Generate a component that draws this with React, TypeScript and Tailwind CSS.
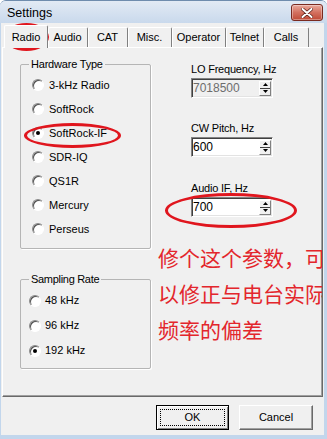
import React from 'react';

const tabs = [
  { label: 'Radio', w: 'w-[44px]' },
  { label: 'Audio', w: 'w-[40px]' },
  { label: 'CAT', w: 'w-[40px]' },
  { label: 'Misc.', w: 'w-[44px]' },
  { label: 'Operator', w: 'w-[54px]' },
  { label: 'Telnet', w: 'w-[38px]' },
  { label: 'Calls', w: 'w-[45px]' },
];

const hardware = ['3-kHz Radio', 'SoftRock', 'SoftRock-IF', 'SDR-IQ', 'QS1R', 'Mercury', 'Perseus'];
const rates = ['48 kHz', '96 kHz', '192 kHz'];

function RadioDot({ checked }: { checked?: boolean }) {
  return (
    <span className="flex h-[12px] w-[12px] shrink-0 items-center justify-center rounded-full border border-b-white border-l-[#8a8a8a] border-r-white border-t-[#8a8a8a] bg-white shadow-[inset_1px_1px_0_#505050]">
      {checked && <span className="h-[4px] w-[4px] rounded-full bg-black" />}
    </span>
  );
}

function Spinner() {
  return (
    <span className="mr-[1px] flex h-[15px] w-[12px] flex-col border border-b-[#808080] border-l-white border-r-[#808080] border-t-white bg-[#f0f0f0]">
      <span className="flex flex-1 items-center justify-center border-b border-[#404040]">
        <svg width="5" height="3" viewBox="0 0 5 3"><path d="M2.5 0 L5 3 L0 3 Z" fill="#000" /></svg>
      </span>
      <span className="flex flex-1 items-center justify-center">
        <svg width="5" height="3" viewBox="0 0 5 3"><path d="M0 0 L5 0 L2.5 3 Z" fill="#000" /></svg>
      </span>
    </span>
  );
}

function SpinField({ label, value, disabled, className }: { label: string; value: string; disabled?: boolean; className?: string }) {
  return (
    <div className={className}>
      <div className="h-[13px] leading-[13px] tracking-[-0.2px]">{label}</div>
      <div
        className={`mt-[2px] flex h-[20px] w-[82px] items-center border border-b-white border-l-[#828282] border-r-white border-t-[#828282] shadow-[inset_1px_1px_0_#404040,inset_-1px_-1px_0_#e3e3e3] ${
          disabled ? 'bg-[#f0f0f0] text-[#6d6d6d]' : 'bg-white text-black'
        }`}
      >
        <span className="flex-1 pl-[1px] text-[12px] leading-[14px]">{value}</span>
        <Spinner />
      </div>
    </div>
  );
}

export default function App() {
  return (
    <div className="relative flex h-[439px] w-[327px] flex-col overflow-hidden rounded-t-[6px] border-t border-[#6f8cad] bg-[#c2d6ec] font-['Liberation_Sans',Arial,sans-serif] text-[11px] text-black">
      {/* title bar */}
      <div className="relative h-[22px] shrink-0 bg-gradient-to-b from-[#e2eaf4] to-[#c9d9ec] pl-[7px] pt-[5px] text-[12.5px] leading-[15px]">
        Settings
        <div className="absolute right-[4px] top-[3px] flex h-[17px] w-[32px] items-center justify-center rounded-[3px] border border-[#7a2a20] bg-gradient-to-b from-[#e9a99c] via-[#d3705f] to-[#c04a36] shadow-[inset_0_0_0_1px_rgba(255,255,255,0.35)]">
          <svg width="12" height="10" viewBox="0 0 12 10">
            <path d="M1.5 1 L10.5 9 M10.5 1 L1.5 9" stroke="#5a2018" strokeWidth="3.4" strokeLinecap="round" />
            <path d="M1.5 1 L10.5 9 M10.5 1 L1.5 9" stroke="#fff" strokeWidth="2" strokeLinecap="round" />
          </svg>
        </div>
      </div>

      {/* dialog body */}
      <div className="ml-[1px] flex h-[412px] w-[323px] flex-col bg-[#f0f0f0]">
        <div className="flex h-[24px] items-end pl-[3px]">
          {tabs.map((t, i) =>
            i === 0 ? (
              <div
                key={t.label}
                className={`relative z-10 -mb-px flex h-[23px] ${t.w} items-center justify-center rounded-t-[2px] border-l border-r border-t border-l-white border-r-[#808080] border-t-white bg-[#f0f0f0]`}
              >
                {t.label}
              </div>
            ) : (
              <div
                key={t.label}
                className={`flex h-[20px] ${t.w} items-center justify-center rounded-t-[2px] border-r border-t border-r-[#808080] border-t-white shadow-[inset_1px_0_0_#fff]`}
              >
                {t.label}
              </div>
            )
          )}
        </div>

        {/* tab panel */}
        <div className="relative ml-[1px] flex h-[350px] w-[321px] overflow-hidden border border-b-[#696969] border-l-white border-r-[#696969] border-t-white pl-[17px] pt-[16px] shadow-[inset_-1px_-1px_0_#a0a0a0]">
          <div className="flex w-[131px] flex-col">
            <div className="relative h-[185px] rounded-[2px] border border-[#b5b5b5] pl-[11px] pt-[8px] shadow-[1px_1px_0_#fff]">
              <span className="absolute left-[8px] top-[-7px] bg-[#f0f0f0] px-[2px] leading-[13px] tracking-[-0.2px]">Hardware Type</span>
              {hardware.map((h, i) => (
                <div key={h} className="flex h-[24px] items-center gap-[5px]">
                  <RadioDot checked={i === 2} />
                  <span>{h}</span>
                </div>
              ))}
            </div>
            <div className="relative mt-[30px] h-[90px] rounded-[2px] border border-[#b5b5b5] pl-[8px] pt-[8px] shadow-[1px_1px_0_#fff]">
              <span className="absolute left-[8px] top-[-7px] bg-[#f0f0f0] px-[2px] leading-[13px] tracking-[-0.3px]">Sampling Rate</span>
              {rates.map((r, i) => (
                <div key={r} className="flex h-[25px] items-center gap-[4px]">
                  <RadioDot checked={i === 2} />
                  <span>{r}</span>
                </div>
              ))}
            </div>
          </div>

          <div className="ml-[40px] flex flex-col pt-[-1px]">
            <SpinField label="LO Frequency, Hz" value="7018500" disabled className="-mt-[1px]" />
            <SpinField label="CW Pitch, Hz" value="600" className="mt-[24px]" />
            <SpinField label="Audio IF, Hz" value="700" className="mt-[25px]" />
          </div>

          {/* annotation */}
          <div className="absolute left-[155px] top-[191px] font-['Noto_Sans_CJK_SC',sans-serif] text-[21px] leading-[36px] text-[#e3262c]">
            <div className="whitespace-nowrap">修个这个参数，可</div>
            <div className="whitespace-nowrap">以修正与电台实际</div>
            <div className="whitespace-nowrap">频率的偏差</div>
          </div>
        </div>

        {/* buttons */}
        <div className="flex justify-end gap-[10px] pr-[11px] pt-[8px]">
          <button className="flex h-[25px] w-[73px] items-center justify-center border border-black bg-[#f0f0f0] shadow-[inset_1px_1px_0_#fff,inset_-1px_-1px_0_#808080]">
            <span className="flex h-[17px] w-[65px] items-center justify-center border border-dotted border-black">OK</span>
          </button>
          <button className="flex h-[25px] w-[74px] items-center justify-center border border-b-[#696969] border-l-white border-r-[#696969] border-t-white bg-[#f0f0f0] shadow-[inset_-1px_-1px_0_#a0a0a0]">
            Cancel
          </button>
        </div>
      </div>

      {/* red annotation rings */}
      <div className="absolute left-[4px] top-[22px] h-[28px] w-[45px] rounded-[50%] border-[3px] border-[#e0161e]" />
      <div className="absolute left-[24px] top-[122px] h-[25px] w-[97px] rounded-[50%] border-[3px] border-[#e0161e]" />
      <div className="absolute left-[165px] top-[192px] h-[35px] w-[132px] rounded-[50%] border-[3px] border-[#e0161e]" />
    </div>
  );
}
